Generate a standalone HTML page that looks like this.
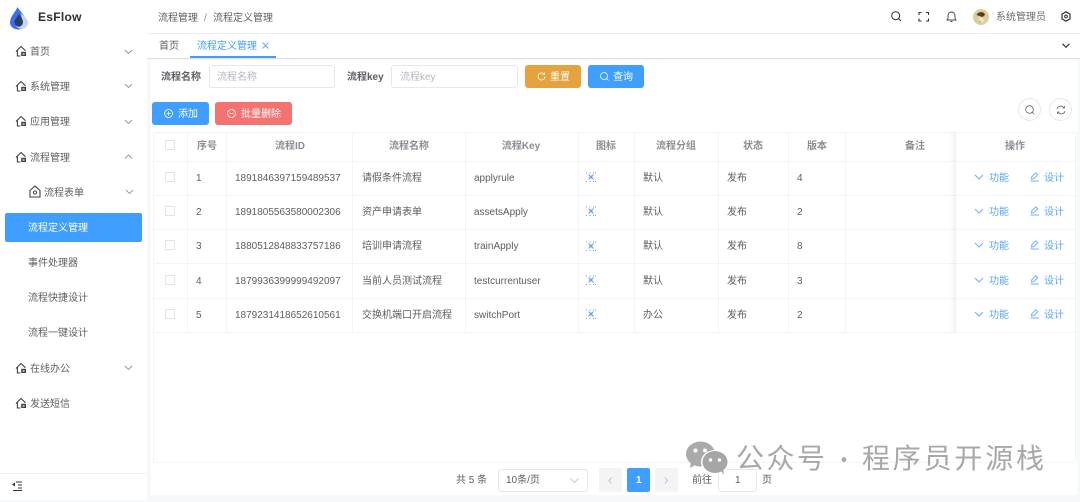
<!DOCTYPE html>
<html lang="zh-CN">
<head>
<meta charset="utf-8">
<title>EsFlow</title>
<style>
html,body{margin:0;padding:0;width:1080px;height:502px;overflow:hidden;background:#f7f8f9}
body{position:relative;font-family:"Liberation Sans","Noto Sans CJK SC",sans-serif;font-size:10px;color:#5c5e63}
.a,.t{position:absolute}
.t{line-height:18px;height:18px;white-space:nowrap;font-style:normal}
.h{font-weight:700;color:#8a8d93;width:auto;transform:translateX(-50%)}
.b{position:absolute;box-sizing:border-box}
svg{position:absolute;overflow:visible;fill:none}
.hl{position:absolute;left:153px;width:922px;height:1px;background:#f2f4f8}
.vl{position:absolute;top:132px;height:200px;width:1px;background:#f3f4f9}
.link{color:#5aa6f8}
</style>
</head>
<body>
<svg width="0" height="0" style="position:absolute">
<defs>
<g id="house" stroke="#404246" stroke-width="1.1"><path d="M1 6.5L6 1.5l4.5 4.2"/><path d="M2.4 5.5V11h3"/><rect x="6.2" y="6.8" width="4.8" height="4.2" fill="#404246" stroke="none"/><rect x="7.6" y="8.4" width="2" height="1.2" fill="#fff" stroke="none"/></g>
<path id="down" d="M0 0l3.5 3.5L7 0" stroke="#8f9298" stroke-width=".9"/>
<g id="img" stroke="#6f9ff0" stroke-width="1"><path d="M0 1h2M3.5 1h2M7 1h3M0 9.500h2M3.500 9.500h2M7 9.500h3" stroke-dasharray="1 1"/><path d="M2.500 2.500l5 5M7.500 2.500l-5 5"/><circle cx="5" cy="5" r="1.500" fill="#6f9ff0" stroke="none"/></g>
<g id="fn"><path d="M0 0l4 4 4-4" stroke="#6cb0f8" stroke-width="1"/></g>
<g id="pen" stroke="#6cb0f8" stroke-width="1"><path d="M1.5 7l.3-2.2L5.8.8l1.9 1.9-4 4z"/><path d="M.5 9H9"/></g>
</defs>
</svg>

<!-- sidebar -->
<div class="b" style="left:0;top:0;width:147px;height:500px;background:#fff"></div>
<svg style="left:8px;top:6px" width="22" height="23" viewBox="0 0 22 23">
<path d="M9.500 1C12 6 18 9 18 16a8 7 0 0 1-16 1C2 10 7 7 9.500 1z" fill="#3f6fe8"/>
<path d="M13 7c3 3 7 6 7 10a6.500 6 0 0 1-12 3c6 0 6-8 5-13z" fill="#c5d3f5"/>
<path d="M11 8c2 3 4 5 4 8.500a4.300 5 0 0 1-8.500 0c0-3.500 3-5.500 4.500-8.500z" fill="#2b3c67"/>
</svg>
<b class="t" style="left:38px;top:9px;font-size:12px;line-height:16px;height:16px;color:#2f3033;letter-spacing:.3px">EsFlow</b>

<svg style="left:15px;top:45px" width="13" height="13"><use href="#house"/></svg><i class="t" style="left:30px;top:44px">首页</i><svg style="left:125px;top:50px" width="8" height="5"><use href="#down"/></svg>
<svg style="left:15px;top:80px" width="13" height="13"><use href="#house"/></svg><i class="t" style="left:30px;top:79px">系统管理</i><svg style="left:125px;top:84px" width="8" height="5"><use href="#down"/></svg>
<svg style="left:15px;top:115px" width="13" height="13"><use href="#house"/></svg><i class="t" style="left:30px;top:114px">应用管理</i><svg style="left:125px;top:120px" width="8" height="5"><use href="#down"/></svg>
<svg style="left:15px;top:151px" width="13" height="13"><use href="#house"/></svg><i class="t" style="left:30px;top:150px">流程管理</i><svg style="left:125px;top:155px" width="8" height="5"><path d="M0 3.500L3.500 0 7 3.500" stroke="#8f9298" stroke-width=".9"/></svg>
<svg style="left:29px;top:185px" width="12" height="13" viewBox="0 0 12 13"><path d="M1 5.500L6 1l5 4.500V12H1z" stroke="#404246" stroke-width="1.100"/><circle cx="6" cy="7.500" r="1.600" stroke="#404246"/></svg><i class="t" style="left:44px;top:185px">流程表单</i><svg style="left:126px;top:190px" width="8" height="5"><use href="#down"/></svg>
<div class="b" style="left:5px;top:213px;width:137px;height:29px;background:#409eff;border-radius:2px"></div>
<i class="t" style="left:28px;top:220px;color:#fff">流程定义管理</i>
<i class="t" style="left:28px;top:255px">事件处理器</i>
<i class="t" style="left:28px;top:290px">流程快捷设计</i>
<i class="t" style="left:28px;top:325px">流程一键设计</i>
<svg style="left:15px;top:362px" width="13" height="13"><use href="#house"/></svg><i class="t" style="left:30px;top:361px">在线办公</i><svg style="left:125px;top:366px" width="8" height="5"><use href="#down"/></svg>
<svg style="left:15px;top:397px" width="13" height="13"><use href="#house"/></svg><i class="t" style="left:30px;top:396px">发送短信</i>
<div class="b" style="left:0;top:473px;width:147px;height:1px;background:#eef1f6"></div>
<svg style="left:12px;top:481px" width="10" height="10"><path d="M4 1h6M6 4h4M6 7h4M1 9.500h9" stroke="#333" stroke-width="1"/><path d="M0 3.500L3 1.500v4z" fill="#333"/></svg>

<!-- top bar -->
<div class="b" style="left:147px;top:0;width:933px;height:34px;background:#fff;border-bottom:1px solid #eceef1"></div>
<i class="t" style="left:158px;top:10px">流程管理</i>
<i class="t" style="left:204px;top:10px;color:#8a8d93">/</i>
<i class="t" style="left:213px;top:10px">流程定义管理</i>
<svg style="left:891px;top:11px" width="11" height="11"><circle cx="4.700" cy="4.700" r="4" stroke="#333" stroke-width="1"/><path d="M7.500 7.500L10 10" stroke="#333" stroke-width="1"/></svg>
<svg style="left:919px;top:12px" width="10" height="10"><path d="M0 3V.5h2.500M7 .5h2.500V3M9.500 6.500V9H7M2.500 9H0V6.500" stroke="#333" stroke-width="1.100"/></svg>
<svg style="left:946px;top:11px" width="11" height="12"><path d="M1 9h9L9 7.500V4.500a3.500 3.500 0 0 0-7 0v3zM4.500 10.500h2" stroke="#444" stroke-width=".9"/></svg>
<svg style="left:973px;top:9px" width="16" height="16" viewBox="0 0 16 16"><circle cx="8" cy="8" r="8" fill="#d8cf9a"/><path d="M3.500 6c1-3 6-4 8-1.500 1 2-1 3-2.500 3.500L6.500 7z" fill="#5a3a1a"/><path d="M6 8.500h4l1 4-2.500 2-3-1.500z" fill="#f1e3c8"/><path d="M6 13l1-2 1 3z" fill="#c79a32"/></svg>
<i class="t" style="left:996px;top:9px;color:#6a6c70">系统管理员</i>
<svg style="left:1061px;top:11px" width="10" height="11" viewBox="0 0 10 11"><path d="M5 .8l4 2.300v4.800l-4 2.300-4-2.300V3.100z" stroke="#333" stroke-width="1.200"/><circle cx="5" cy="5.500" r="1.400" stroke="#333" stroke-width="1"/></svg>

<!-- tabs -->
<div class="b" style="left:147px;top:34px;width:933px;height:25px;background:#fff;border-bottom:1px solid #dcdee2"></div>
<i class="t" style="left:159px;top:38px">首页</i>
<div class="b" style="left:190px;top:34px;width:86px;height:24px;border-bottom:2px solid #409eff"></div>
<i class="t" style="left:197px;top:38px;color:#409eff">流程定义管理</i>
<svg style="left:262px;top:42px" width="7" height="7"><path d="M.5.500l6 6M6.500.500l-6 6" stroke="#68a9f3" stroke-width=".9"/></svg>
<svg style="left:1062px;top:43px" width="8" height="6"><path d="M.5.800L4 4.300 7.500.800" stroke="#333" stroke-width="1.200"/></svg>

<!-- main card -->
<div class="b" style="left:151px;top:60px;width:926px;height:435px;background:#fff"></div>

<!-- search -->
<b class="t" style="left:161px;top:69px;color:#5c5e63">流程名称</b>
<div class="b" style="left:209px;top:65px;width:126px;height:23px;border:1px solid #e6e8ec;border-radius:3px"></div>
<i class="t" style="left:217px;top:69px;color:#b4b7bd">流程名称</i>
<b class="t" style="left:347px;top:69px;color:#5c5e63">流程key</b>
<div class="b" style="left:391px;top:65px;width:127px;height:23px;border:1px solid #e6e8ec;border-radius:3px"></div>
<i class="t" style="left:400px;top:69px;color:#b4b7bd">流程key</i>
<div class="b" style="left:525px;top:65px;width:56px;height:23px;background:#e6a23c;border-radius:3px"></div>
<svg style="left:537px;top:72px" width="9" height="9"><path d="M8 4.500a3.500 3.500 0 1 1-1-2.500M7.500.500v2h-2" stroke="#fff" stroke-width=".8"/></svg>
<i class="t" style="left:550px;top:69px;color:#fff">重置</i>
<div class="b" style="left:588px;top:65px;width:56px;height:23px;background:#409eff;border-radius:3px"></div>
<svg style="left:600px;top:72px" width="9" height="9"><circle cx="4" cy="4" r="3.500" stroke="#fff" stroke-width=".8"/><path d="M6.500 6.500L8.500 8.500" stroke="#fff" stroke-width=".8"/></svg>
<i class="t" style="left:613px;top:69px;color:#fff">查询</i>

<!-- actions -->
<div class="b" style="left:152px;top:102px;width:57px;height:23px;background:#409eff;border-radius:3px"></div>
<svg style="left:164px;top:109px" width="9" height="9"><circle cx="4.500" cy="4.500" r="4" stroke="#fff" stroke-width=".8"/><path d="M2.500 4.500h4M4.500 2.500v4" stroke="#fff" stroke-width=".8"/></svg>
<i class="t" style="left:178px;top:106px;color:#fff">添加</i>
<div class="b" style="left:215px;top:102px;width:77px;height:23px;background:#f56c6c;opacity:.96;border-radius:3px"></div>
<svg style="left:227px;top:109px" width="9" height="9"><circle cx="4.500" cy="4.500" r="4" stroke="#fff" stroke-width=".8"/><path d="M2.500 4.500h4" stroke="#fff" stroke-width=".8"/></svg>
<i class="t" style="left:241px;top:106px;color:#fff">批量删除</i>
<div class="b" style="left:1018px;top:98px;width:23px;height:23px;border:1px solid #e6e8ec;border-radius:50%"></div>
<svg style="left:1025px;top:105px" width="10" height="10"><circle cx="4.500" cy="4.500" r="3.800" stroke="#666" stroke-width=".8"/><path d="M7.200 7.200L9 9" stroke="#666" stroke-width=".8"/></svg>
<div class="b" style="left:1049px;top:98px;width:23px;height:23px;border:1px solid #e6e8ec;border-radius:50%"></div>
<svg style="left:1056px;top:105px" width="10" height="10"><path d="M1 4a3.800 3.800 0 0 1 7-1M9 6a3.800 3.800 0 0 1-7 1M8.500 1v2h-2M1.500 9V7h2" stroke="#666" stroke-width=".8"/></svg>

<!-- table lines -->
<div class="hl" style="top:132px"></div>
<div class="hl" style="top:161px"></div>
<div class="hl" style="top:195px"></div>
<div class="hl" style="top:229px"></div>
<div class="hl" style="top:263px"></div>
<div class="hl" style="top:298px"></div>
<div class="hl" style="top:332px"></div>
<div class="hl" style="top:462px"></div>
<div class="vl" style="left:153px;height:330px"></div>
<div class="vl" style="left:187px"></div>
<div class="vl" style="left:226px"></div>
<div class="vl" style="left:352px"></div>
<div class="vl" style="left:465px"></div>
<div class="vl" style="left:578px"></div>
<div class="vl" style="left:634px"></div>
<div class="vl" style="left:718px"></div>
<div class="vl" style="left:788px"></div>
<div class="vl" style="left:845px"></div>
<div class="vl" style="left:1075px;height:330px"></div>
<div class="b" style="left:949px;top:132px;width:6px;height:200px;background:linear-gradient(to right,rgba(0,0,0,0),rgba(0,0,0,.04))"></div>
<div class="b" style="left:955px;top:132px;width:1px;height:200px;background:#f0f2f6"></div>

<!-- header -->
<div class="b" style="left:165px;top:140px;width:10px;height:10px;border:1px solid #e2e4e8;border-radius:1px"></div>
<b class="t h" style="left:207px;top:138px">序号</b>
<b class="t h" style="left:290px;top:138px">流程ID</b>
<b class="t h" style="left:409px;top:138px">流程名称</b>
<b class="t h" style="left:521px;top:138px">流程Key</b>
<b class="t h" style="left:606px;top:138px">图标</b>
<b class="t h" style="left:676px;top:138px">流程分组</b>
<b class="t h" style="left:753px;top:138px">状态</b>
<b class="t h" style="left:817px;top:138px">版本</b>
<b class="t h" style="left:915px;top:138px">备注</b>
<b class="t h" style="left:1015px;top:138px">操作</b>

<!-- row 1 -->
<div class="b" style="left:165px;top:172px;width:10px;height:10px;border:1px solid #e2e4e8;border-radius:1px"></div>
<i class="t" style="left:196px;top:170px">1</i>
<i class="t" style="left:235px;top:170px">1891846397159489537</i>
<i class="t" style="left:362px;top:170px">请假条件流程</i>
<i class="t" style="left:474px;top:170px">applyrule</i>
<svg style="left:586px;top:172px" width="10" height="10"><use href="#img"/></svg>
<i class="t" style="left:643px;top:170px">默认</i>
<i class="t" style="left:727px;top:170px">发布</i>
<i class="t" style="left:797px;top:170px">4</i>
<svg style="left:975px;top:175px" width="8" height="5"><use href="#fn"/></svg>
<i class="t link" style="left:989px;top:170px">功能</i>
<svg style="left:1030px;top:172px" width="10" height="10"><use href="#pen"/></svg>
<i class="t link" style="left:1044px;top:170px">设计</i>

<!-- row 2 -->
<div class="b" style="left:165px;top:206px;width:10px;height:10px;border:1px solid #e2e4e8;border-radius:1px"></div>
<i class="t" style="left:196px;top:204px">2</i>
<i class="t" style="left:235px;top:204px">1891805563580002306</i>
<i class="t" style="left:362px;top:204px">资产申请表单</i>
<i class="t" style="left:474px;top:204px">assetsApply</i>
<svg style="left:586px;top:206px" width="10" height="10"><use href="#img"/></svg>
<i class="t" style="left:643px;top:204px">默认</i>
<i class="t" style="left:727px;top:204px">发布</i>
<i class="t" style="left:797px;top:204px">2</i>
<svg style="left:975px;top:209px" width="8" height="5"><use href="#fn"/></svg>
<i class="t link" style="left:989px;top:204px">功能</i>
<svg style="left:1030px;top:206px" width="10" height="10"><use href="#pen"/></svg>
<i class="t link" style="left:1044px;top:204px">设计</i>

<!-- row 3 -->
<div class="b" style="left:165px;top:240px;width:10px;height:10px;border:1px solid #e2e4e8;border-radius:1px"></div>
<i class="t" style="left:196px;top:238px">3</i>
<i class="t" style="left:235px;top:238px">1880512848833757186</i>
<i class="t" style="left:362px;top:238px">培训申请流程</i>
<i class="t" style="left:474px;top:238px">trainApply</i>
<svg style="left:586px;top:241px" width="10" height="10"><use href="#img"/></svg>
<i class="t" style="left:643px;top:238px">默认</i>
<i class="t" style="left:727px;top:238px">发布</i>
<i class="t" style="left:797px;top:238px">8</i>
<svg style="left:975px;top:243px" width="8" height="5"><use href="#fn"/></svg>
<i class="t link" style="left:989px;top:238px">功能</i>
<svg style="left:1030px;top:240px" width="10" height="10"><use href="#pen"/></svg>
<i class="t link" style="left:1044px;top:238px">设计</i>

<!-- row 4 -->
<div class="b" style="left:165px;top:275px;width:10px;height:10px;border:1px solid #e2e4e8;border-radius:1px"></div>
<i class="t" style="left:196px;top:273px">4</i>
<i class="t" style="left:235px;top:273px">1879936399999492097</i>
<i class="t" style="left:362px;top:273px">当前人员测试流程</i>
<i class="t" style="left:474px;top:273px">testcurrentuser</i>
<svg style="left:586px;top:275px" width="10" height="10"><use href="#img"/></svg>
<i class="t" style="left:643px;top:273px">默认</i>
<i class="t" style="left:727px;top:273px">发布</i>
<i class="t" style="left:797px;top:273px">3</i>
<svg style="left:975px;top:278px" width="8" height="5"><use href="#fn"/></svg>
<i class="t link" style="left:989px;top:273px">功能</i>
<svg style="left:1030px;top:275px" width="10" height="10"><use href="#pen"/></svg>
<i class="t link" style="left:1044px;top:273px">设计</i>

<!-- row 5 -->
<div class="b" style="left:165px;top:309px;width:10px;height:10px;border:1px solid #e2e4e8;border-radius:1px"></div>
<i class="t" style="left:196px;top:307px">5</i>
<i class="t" style="left:235px;top:307px">1879231418652610561</i>
<i class="t" style="left:362px;top:307px">交换机端口开启流程</i>
<i class="t" style="left:474px;top:307px">switchPort</i>
<svg style="left:586px;top:309px" width="10" height="10"><use href="#img"/></svg>
<i class="t" style="left:643px;top:307px">办公</i>
<i class="t" style="left:727px;top:307px">发布</i>
<i class="t" style="left:797px;top:307px">2</i>
<svg style="left:975px;top:312px" width="8" height="5"><use href="#fn"/></svg>
<i class="t link" style="left:989px;top:307px">功能</i>
<svg style="left:1030px;top:309px" width="10" height="10"><use href="#pen"/></svg>
<i class="t link" style="left:1044px;top:307px">设计</i>

<!-- pagination -->
<i class="t" style="left:456px;top:472px">共 5 条</i>
<div class="b" style="left:498px;top:469px;width:90px;height:23px;border:1px solid #e4e7ed;border-radius:3px"></div>
<i class="t" style="left:506px;top:472px">10条/页</i>
<svg style="left:570px;top:478px" width="9" height="6"><path d="M.5.500l4 4 4-4" stroke="#c0c4cc" stroke-width=".9"/></svg>
<div class="b" style="left:599px;top:468px;width:23px;height:24px;background:#f4f4f5;border-radius:2px"></div>
<svg style="left:608px;top:477px" width="5" height="7"><path d="M3.500.500L.8 3.500l2.700 3" stroke="#b6b9bf" stroke-width=".9"/></svg>
<div class="b" style="left:627px;top:468px;width:23px;height:24px;background:#409eff;border-radius:2px"></div>
<b class="t" style="left:636px;top:472px;color:#fff">1</b>
<div class="b" style="left:655px;top:468px;width:23px;height:24px;background:#f4f4f5;border-radius:2px"></div>
<svg style="left:664px;top:477px" width="5" height="7"><path d="M.8.500l2.700 3-2.700 3" stroke="#b6b9bf" stroke-width=".9"/></svg>
<i class="t" style="left:692px;top:472px">前往</i>
<div class="b" style="left:718px;top:469px;width:39px;height:23px;border:1px solid #e4e7ed;border-radius:3px;background:#fff"></div>
<i class="t" style="left:735px;top:472px">1</i>
<i class="t" style="left:762px;top:472px">页</i>

<!-- watermark -->
<svg style="left:686px;top:441px" width="43" height="34" viewBox="0 0 43 34">
<ellipse cx="14.500" cy="13" rx="14.500" ry="12.500" fill="#aaaaaa"/>
<path d="M5 21l-1 6 7-4z" fill="#aaaaaa"/>
<ellipse cx="29" cy="21" rx="14" ry="12" fill="#fff"/>
<ellipse cx="29" cy="21" rx="12.500" ry="11" fill="#a6a6a6"/>
<path d="M35 30l3 4-1-6z" fill="#a6a6a6"/>
<circle cx="9.500" cy="9.500" r="2" fill="#fff"/><circle cx="19" cy="9.500" r="2" fill="#fff"/>
<circle cx="24.500" cy="19" r="1.700" fill="#fff"/><circle cx="33.500" cy="19" r="1.700" fill="#fff"/>
</svg>
<span class="t" style="left:736px;top:442px;font-size:28px;line-height:34px;height:34px;color:#a8a8a8;letter-spacing:2.500px">公众号</span>
<span class="t" style="left:830px;top:442px;font-size:28px;line-height:34px;height:34px;color:#a8a8a8;font-family:'Noto Sans CJK SC',sans-serif;transform:scale(.8)">·</span>
<span class="t" style="left:862px;top:442px;font-size:28px;line-height:34px;height:34px;color:#a8a8a8;letter-spacing:2.800px">程序员开源栈</span>
</body>
</html>
